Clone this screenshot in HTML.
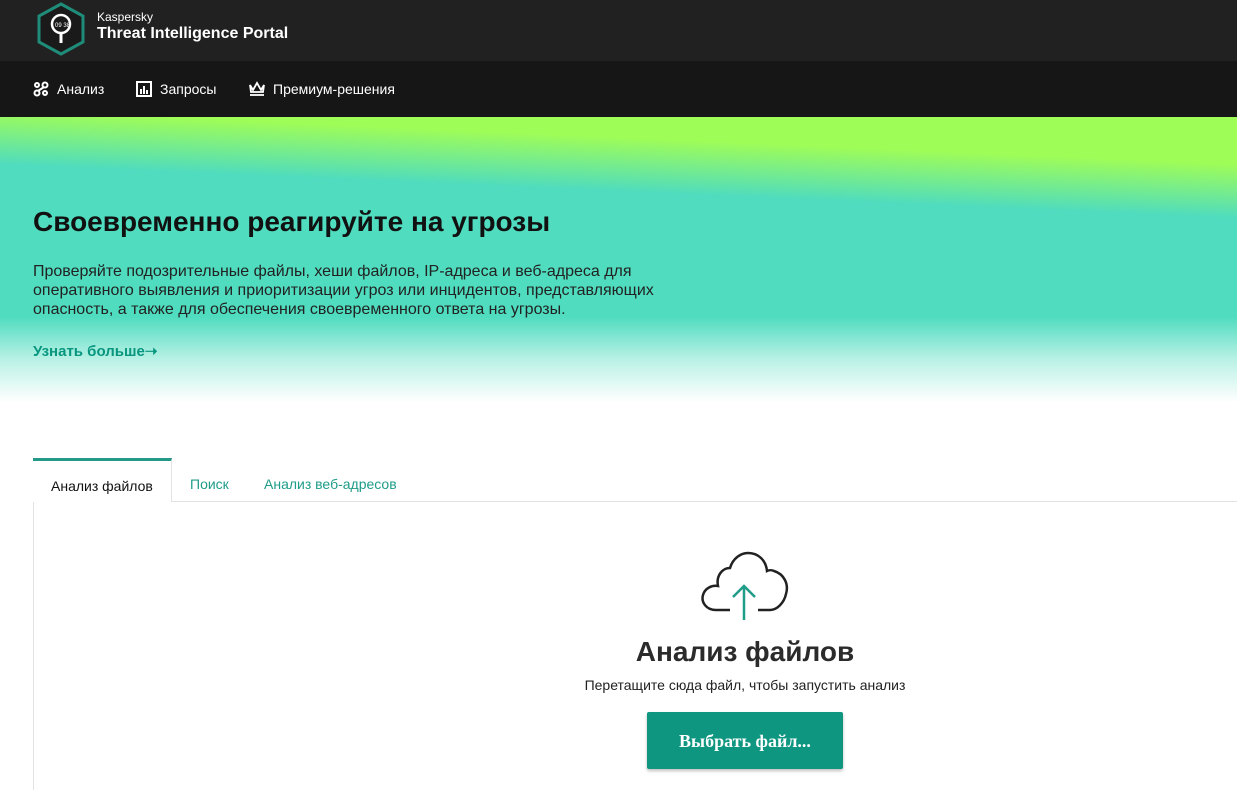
<!DOCTYPE html>
<html><head><meta charset="utf-8"><style>
*{margin:0;padding:0;box-sizing:border-box}
body{width:1237px;height:790px;overflow:hidden;background:#fff;font-family:"Liberation Sans",Arial,sans-serif;position:relative}
.top{position:absolute;left:0;top:0;width:1237px;height:61px;background:#212121}
.nav{position:absolute;left:0;top:61px;width:1237px;height:56px;background:#161616;color:#fff;font-size:14px}
.nav span{position:absolute;top:20px}
.hero{position:absolute;left:0;top:117px;width:1237px;height:285px;background:linear-gradient(to bottom,rgba(255,255,255,0) 0%,rgba(255,255,255,0) 70%,rgba(255,255,255,.6) 85%,#fff 100%),linear-gradient(182.5deg,#9ffd58 0%,#9ffd58 14%,#4fdcbf 30%,#4fdcbf 100%)}
h1{position:absolute;left:33px;top:206px;font-size:28px;font-weight:bold;color:#111}
.p{position:absolute;left:33px;top:262px;font-size:16px;line-height:19px;color:#222;width:660px}
.more{position:absolute;left:33px;top:342px;font-size:15px;font-weight:bold;color:#08967f}
.tabline{position:absolute;left:33px;top:501px;width:1204px;height:1px;background:#e3e3e3}
.tableft{position:absolute;left:33px;top:458px;width:1px;height:332px;background:#e3e3e3}
.tab{position:absolute;left:33px;top:458px;width:139px;height:44px;background:#fff;border-top:3px solid #239a89;border-right:1px solid #e3e3e3;font-size:14px;color:#111;padding:17px 0 0 18px}
.t2{position:absolute;top:476px;font-size:14px;color:#1f9c88}
.btn{position:absolute;left:647px;top:712px;width:196px;height:57px;background:#0e9681;border-radius:2px;box-shadow:0 2px 3px rgba(0,0,0,.25);color:#fff;font-family:"Liberation Serif",serif;font-weight:bold;font-size:18px;text-align:center;line-height:58px}
</style></head><body>
<div class="top">
<svg style="position:absolute;left:35px;top:2px" width="52" height="54" viewBox="0 0 52 54"><polygon points="26,2 48,14 48,40 26,52 4,40 4,14" fill="#1a1a1a" stroke="#1f8c7a" stroke-width="3"/><circle cx="26" cy="22" r="9" fill="none" stroke="#fff" stroke-width="2.5"/><rect x="24.5" y="31" width="3" height="10" fill="#fff"/><text x="20" y="25" font-size="6" fill="#fff" font-family="Liberation Sans">09 38</text></svg>
<div style="position:absolute;left:97px;top:10px;color:#fff;font-size:12px">Kaspersky</div>
<div style="position:absolute;left:97px;top:25px;color:#fff;font-size:16px;font-weight:bold">Threat Intelligence Portal</div>
</div>
<div class="nav">
<svg style="position:absolute;left:33px;top:20px" width="16" height="16" viewBox="0 0 16 16" fill="none" stroke="#fff" stroke-width="2"><circle cx="4" cy="12" r="2.5"/><circle cx="12" cy="4" r="2.5"/><circle cx="4" cy="4" r="2"/><circle cx="12" cy="12" r="2"/><path d="M5 10 L11 6"/></svg>
<span style="left:57px">Анализ</span>
<svg style="position:absolute;left:136px;top:20px" width="16" height="16" viewBox="0 0 16 16"><rect x="1" y="1" width="14" height="14" fill="none" stroke="#fff" stroke-width="2"/><rect x="4" y="8" width="2" height="5" fill="#fff"/><rect x="7" y="5" width="2" height="8" fill="#fff"/><rect x="10" y="9" width="2" height="4" fill="#fff"/></svg>
<span style="left:160px">Запросы</span>
<svg style="position:absolute;left:248px;top:20px" width="18" height="16" viewBox="0 0 18 16" fill="none" stroke="#fff" stroke-width="1.8"><path d="M2 4 L5 9 L9 2 L13 9 L16 4 L15 11 H3 Z"/><path d="M2 14 H16"/></svg>
<span style="left:273px">Премиум-решения</span>
</div>
<div class="hero"></div>
<h1>Своевременно реагируйте на угрозы</h1>
<div class="p">Проверяйте подозрительные файлы, хеши файлов, IP-адреса и веб-адреса для оперативного выявления и приоритизации угроз или инцидентов, представляющих опасность, а также для обеспечения своевременного ответа на угрозы.</div>
<div class="more">Узнать больше➝</div>
<div class="tabline"></div><div class="tableft"></div>
<div class="tab">Анализ файлов</div>
<div class="t2" style="left:190px">Поиск</div>
<div class="t2" style="left:264px">Анализ веб-адресов</div>
<svg style="position:absolute;left:700px;top:550px" width="90" height="72" viewBox="0 0 90 72" fill="none"><path d="M30 60 H16 C6 60 1 52 3 45 C5 38 12 35 18 36 C16 26 22 18 30 18 C33 8 41 3 48 3 C58 3 66 10 67 21 C69 20 72 20 74 21 C84 24 89 34 86 44 C84 53 77 60 70 60 H58" stroke="#222" stroke-width="2.5"/><path d="M44 70 V36 M33 47 L44 36 L55 47" stroke="#1f9c88" stroke-width="2.5"/></svg>
<div style="position:absolute;left:0;width:1490px;top:636px;text-align:center;font-size:28px;font-weight:bold;color:#2b2b2b">Анализ файлов</div>
<div style="position:absolute;left:0;width:1490px;top:677px;text-align:center;font-size:14px;color:#222">Перетащите сюда файл, чтобы запустить анализ</div>
<div class="btn">Выбрать файл...</div>
</body></html>
